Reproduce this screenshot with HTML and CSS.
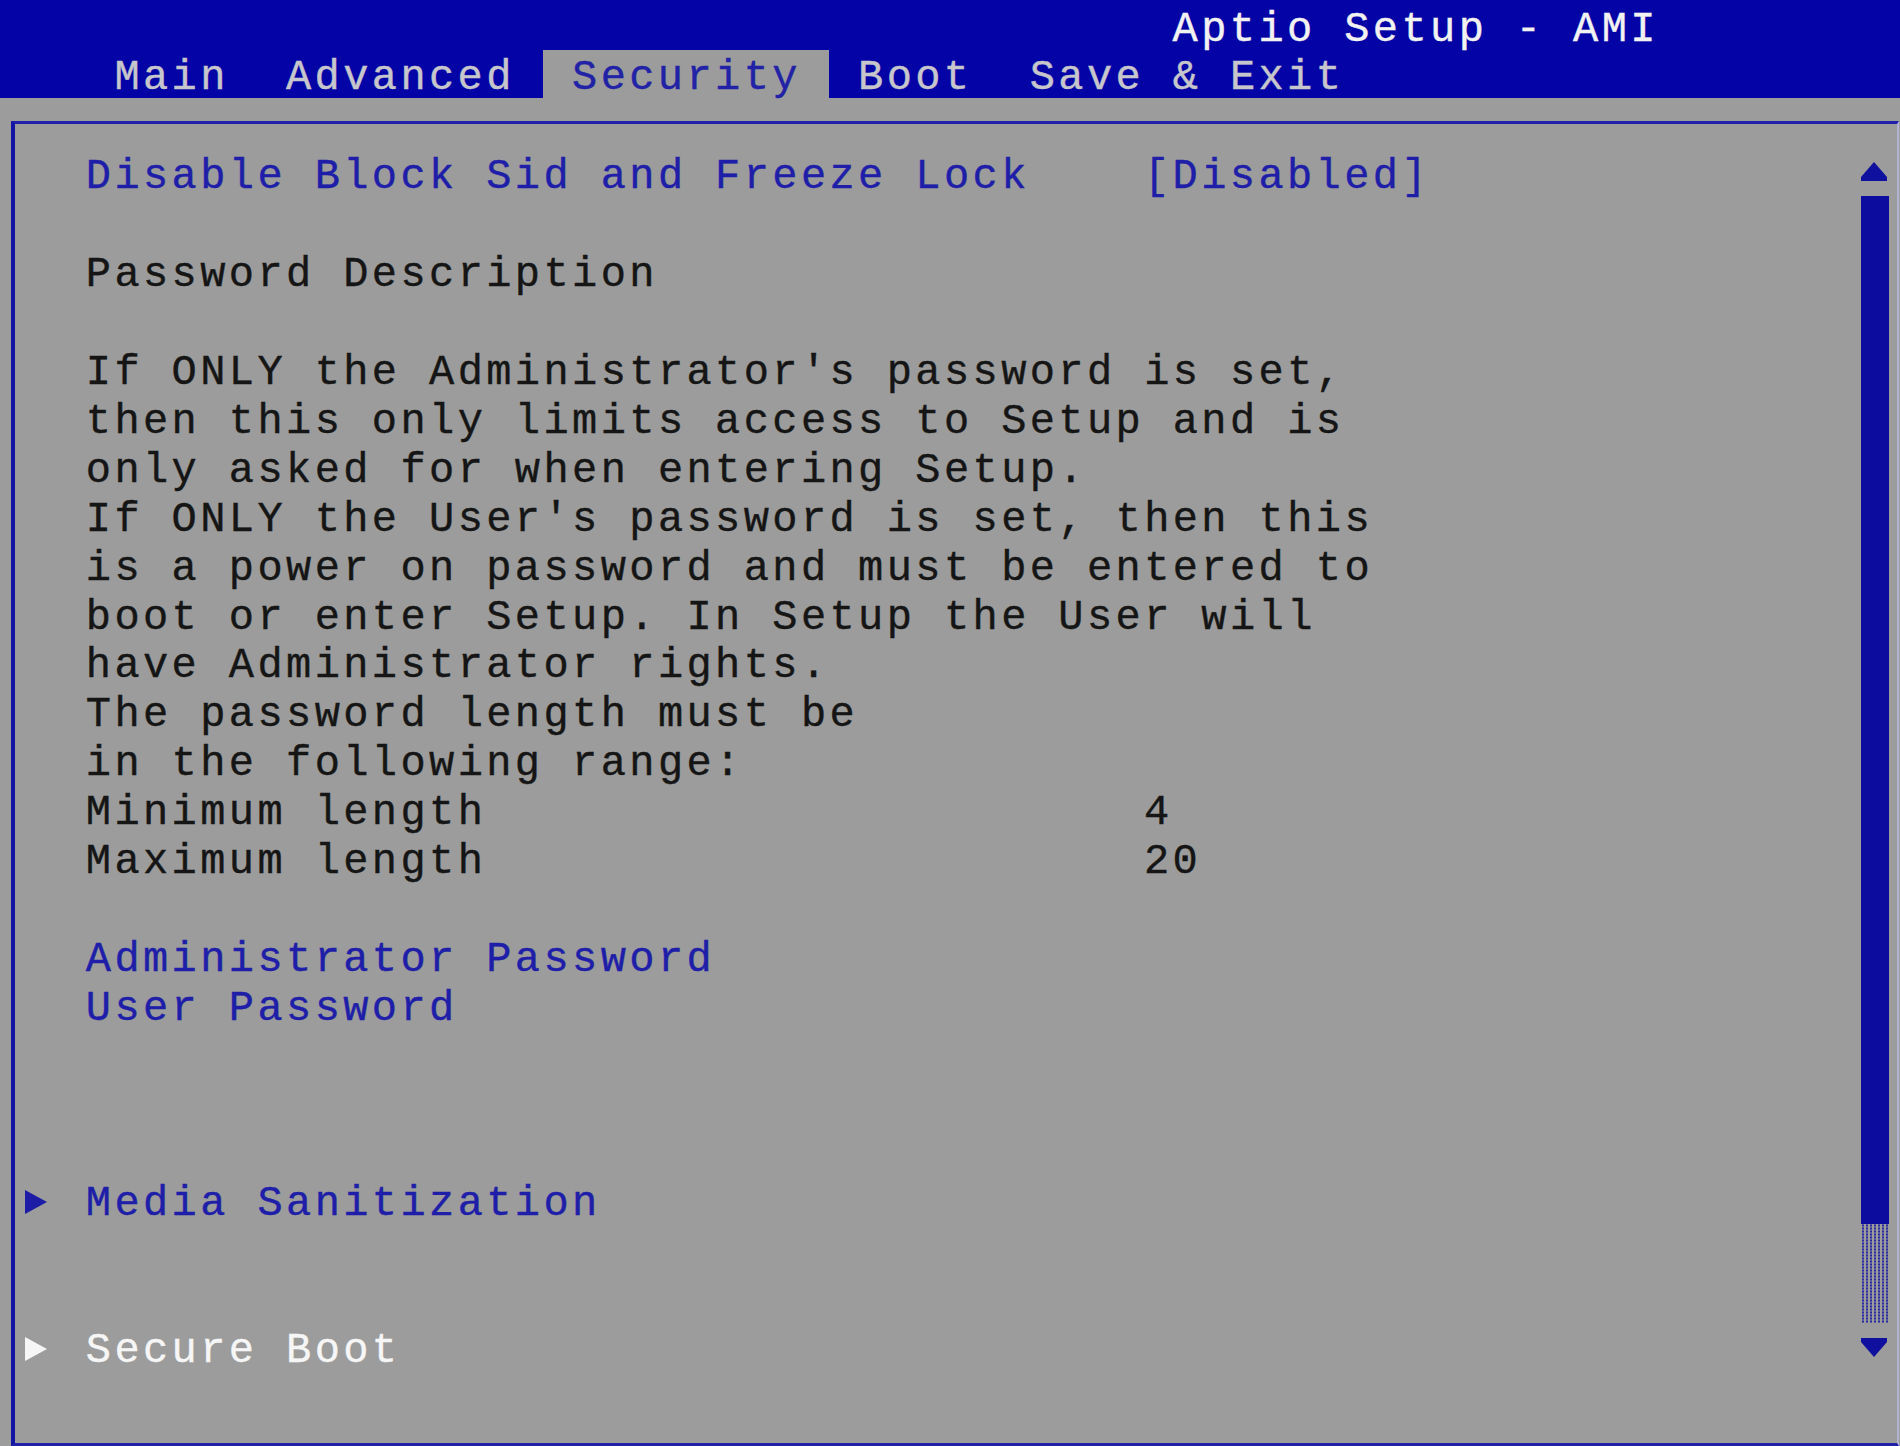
FILE: index.html
```html
<!DOCTYPE html>
<html lang="en">
<head>
<meta charset="utf-8">
<title>Aptio Setup - AMI</title>
<link rel="stylesheet" href="styles.css">
</head>
<body>
<div class="screen">
  <header class="header">
    <div class="title">Aptio Setup - AMI</div>
    <nav class="tabs">
      <span class="tab">Main</span>
      <span class="tab">Advanced</span>
      <span class="tab active">Security</span>
      <span class="tab">Boot</span>
      <span class="tab">Save &amp; Exit</span>
    </nav>
  </header>
  <main class="frame">
    <div class="content">
      <div class="row"><span class="mark"></span><span class="label blue">Disable Block Sid and Freeze Lock</span><span class="value blue">[Disabled]</span></div>
      <div class="row"></div>
      <div class="row"><span class="mark"></span><span class="label">Password Description</span></div>
      <div class="row"></div>
      <div class="row"><span class="mark"></span><span class="label">If ONLY the Administrator's password is set,</span></div>
      <div class="row"><span class="mark"></span><span class="label">then this only limits access to Setup and is</span></div>
      <div class="row"><span class="mark"></span><span class="label">only asked for when entering Setup.</span></div>
      <div class="row"><span class="mark"></span><span class="label">If ONLY the User's password is set, then this</span></div>
      <div class="row"><span class="mark"></span><span class="label">is a power on password and must be entered to</span></div>
      <div class="row"><span class="mark"></span><span class="label">boot or enter Setup. In Setup the User will</span></div>
      <div class="row"><span class="mark"></span><span class="label">have Administrator rights.</span></div>
      <div class="row"><span class="mark"></span><span class="label">The password length must be</span></div>
      <div class="row"><span class="mark"></span><span class="label">in the following range:</span></div>
      <div class="row"><span class="mark"></span><span class="label">Minimum length</span><span class="value">4</span></div>
      <div class="row"><span class="mark"></span><span class="label">Maximum length</span><span class="value">20</span></div>
      <div class="row"></div>
      <div class="row"><span class="mark"></span><span class="label blue">Administrator Password</span></div>
      <div class="row"><span class="mark"></span><span class="label blue">User Password</span></div>
      <div class="row"></div>
      <div class="row"></div>
      <div class="row"></div>
      <div class="row"><span class="mark"><svg width="22" height="24" viewBox="0 0 22 24"><polygon points="0,0 22,12 0,24" fill="#1c1ca6"/></svg></span><span class="label blue">Media Sanitization</span></div>
      <div class="row"></div>
      <div class="row"></div>
      <div class="row"><span class="mark"><svg width="22" height="24" viewBox="0 0 22 24"><polygon points="0,0 22,12 0,24" fill="#f6f6f6"/></svg></span><span class="label white">Secure Boot</span></div>
    </div>
    <div class="scrollbar">
      <svg class="arrow" width="28" height="19" viewBox="0 0 28 19"><polygon points="13,0 26,15 26,19 0,19 0,15" fill="#10109e"/></svg>
      <div class="thumb"></div>
      <div class="track"></div>
      <svg class="arrow down" width="28" height="19" viewBox="0 0 28 19"><polygon points="0,0 26,0 26,4 13,19 0,4" fill="#10109e"/></svg>
    </div>
  </main>
</div>
</body>
</html>
```
FILE: styles.css
```css
html, body {
  margin: 0;
  padding: 0;
  background: #9b9c9b;
}

body {
  width: 1900px;
  height: 1446px;
  overflow: hidden;
  font-family: "Liberation Mono", "DejaVu Sans Mono", monospace;
  font-size: 42px;
  letter-spacing: 3.4px;
  color: #151515;
  -webkit-text-stroke: 0.4px currentColor;
}

.screen {
  display: flex;
  flex-direction: column;
  height: 1446px;
}

.header {
  height: 98px;
  background: #0404a6;
  flex: none;
}

.title {
  height: 50px;
  line-height: 60px;
  padding-left: 1172.6px;
  color: #f2f2f2;
  white-space: pre;
}

.tabs {
  display: flex;
  height: 48px;
  padding-left: 114.4px;
}

.tab {
  height: 48px;
  line-height: 56px;
  margin-right: 57.2px;
  color: #c6c6cc;
  white-space: pre;
}

.tab.active {
  background: #9b9c9b;
  color: #2222a6;
  padding: 0 28.6px;
  margin-left: -28.6px;
  margin-right: 28.6px;
}

.frame {
  margin: 23px 1px 0 11px;
  height: 1325px;
  box-sizing: border-box;
  border-top: 3px solid #2020a8;
  border-left: 4px solid #1414a4;
  border-bottom: 3px solid #2020a8;
  border-right: 2px solid #b4b4d2;
  display: flex;
  flex: none;
}

.content {
  flex: 1;
  padding-top: 29.4px;
}

.row {
  display: grid;
  grid-template-columns: 70.8px 1058.2px auto;
  height: 48.92px;
  line-height: 48.92px;
}

.label, .value {
  white-space: pre;
}

.mark {
  display: flex;
  align-items: center;
  padding: 0 0 5px 10px;
}

.mark svg {
  display: block;
}

.blue {
  color: #1e1ea8;
}

.white {
  color: #f6f6f6;
}

.scrollbar {
  width: 28px;
  margin-right: 8px;
  padding-top: 38px;
  display: flex;
  flex-direction: column;
}

.arrow {
  display: block;
  flex: none;
}

.thumb {
  margin-top: 15px;
  height: 1028px;
  background: #0c0c9e;
  flex: none;
}

.track {
  height: 99px;
  flex: none;
  background-color: #9b9c9b;
  background-image: radial-gradient(circle, #2a2aa4 0.9px, transparent 1.4px);
  background-size: 4px 3px;
}

.arrow.down {
  margin-top: 15px;
}
```
